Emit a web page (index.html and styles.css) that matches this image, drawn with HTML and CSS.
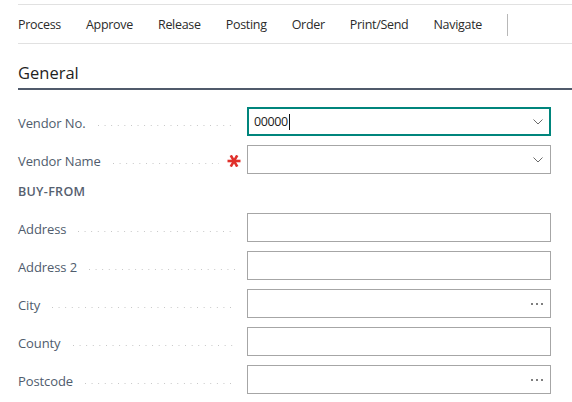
FILE: index.html
```html
<!DOCTYPE html>
<html lang="en">
<head>
<meta charset="utf-8">
<title>Purchase Order</title>
<link rel="stylesheet" href="styles.css">
</head>
<body>
<div class="page">
  <nav class="actions">
    <span class="action">Process</span>
    <span class="action">Approve</span>
    <span class="action">Release</span>
    <span class="action">Posting</span>
    <span class="action">Order</span>
    <span class="action">Print/Send</span>
    <span class="action">Navigate</span>
    <span class="divider"></span>
  </nav>

  <section class="group">
    <h2 class="group-title">General</h2>

    <div class="fields">
      <div class="field">
        <div class="field-label"><span class="label-text">Vendor No.</span><span class="leader"></span></div>
        <div class="control focused">
          <span class="value">00000</span><span class="caret"></span>
          <svg class="chevron" width="10" height="6" viewBox="0 0 10 6"><path d="M0.5 0.5 L5 5 L9.5 0.5" fill="none" stroke="#6b6b6b" stroke-width="1"/></svg>
        </div>
      </div>

      <div class="field">
        <div class="field-label"><span class="label-text">Vendor Name</span><span class="leader"></span>
          <svg class="required" width="14" height="12" viewBox="0 0 14 12"><g stroke="#e0302b" stroke-width="2.6" stroke-linecap="butt"><path d="M0.5 6 H13.5"/><path d="M3.75 0.4 L10.25 11.6"/><path d="M10.25 0.4 L3.75 11.6"/></g></svg>
        </div>
        <div class="control">
          <span class="value"></span>
          <svg class="chevron" width="10" height="6" viewBox="0 0 10 6"><path d="M0.5 0.5 L5 5 L9.5 0.5" fill="none" stroke="#6b6b6b" stroke-width="1"/></svg>
        </div>
      </div>

      <div class="subheading">BUY-FROM</div>

      <div class="field">
        <div class="field-label"><span class="label-text">Address</span><span class="leader"></span></div>
        <div class="control"><span class="value"></span></div>
      </div>

      <div class="field">
        <div class="field-label"><span class="label-text">Address 2</span><span class="leader"></span></div>
        <div class="control"><span class="value"></span></div>
      </div>

      <div class="field">
        <div class="field-label"><span class="label-text">City</span><span class="leader"></span></div>
        <div class="control"><span class="value"></span><span class="more"><i></i><i></i><i></i></span></div>
      </div>

      <div class="field">
        <div class="field-label"><span class="label-text">County</span><span class="leader"></span></div>
        <div class="control"><span class="value"></span></div>
      </div>

      <div class="field">
        <div class="field-label"><span class="label-text">Postcode</span><span class="leader"></span></div>
        <div class="control"><span class="value"></span><span class="more"><i></i><i></i><i></i></span></div>
      </div>
    </div>
  </section>
</div>
</body>
</html>
```

FILE: styles.css
```css
* { box-sizing: border-box; }

html, body {
  margin: 0;
  padding: 0;
  background: #ffffff;
}

body {
  font-family: "Open Sans", "Noto Sans", "Liberation Sans", sans-serif;
  font-size: 12.5px;
  color: #212121;
}

.page {
  padding: 4px 0 0 18px;
}

.actions {
  display: flex;
  align-items: center;
  gap: 25px;
  height: 40px;
  padding-top: 1px;
  border-top: 1px solid #e1e1e1;
  border-bottom: 1px solid #e1e1e1;
}

.action {
  color: #2b2b2b;
  white-space: nowrap;
  letter-spacing: -0.3px;
}

.divider {
  width: 1px;
  height: 22px;
  background: #b8b8b8;
}

.group-title {
  margin: 17px 0 0 0;
  font-size: 16.5px;
  font-weight: 400;
  line-height: 24px;
  padding-bottom: 3px;
  border-bottom: 2px solid #505a6b;
  color: #1f1f1f;
}

.fields {
  display: flex;
  flex-direction: column;
  gap: 9px;
  padding-top: 17px;
  padding-right: 21px;
}

.field {
  display: grid;
  grid-template-columns: 229px 1fr;
  height: 29px;
}

.field-label {
  display: flex;
  align-items: center;
  padding-top: 2px;
  padding-right: 12px;
  color: #505c6d;
  font-size: 13px;
  letter-spacing: -0.1px;
  white-space: nowrap;
}

.leader {
  flex: 1;
  align-self: stretch;
  margin-left: 12px;
  background-image: linear-gradient(to right, #c4c4c4 1px, transparent 1px);
  background-size: 6.6px 1px;
  background-repeat: repeat-x;
  background-position: 0 16px;
}

.required {
  flex: none;
  margin: 0 -6px 0 8px;
}

.control {
  display: flex;
  align-items: center;
  height: 29px;
  border: 1px solid #a6a6a6;
  padding: 0 7px 0 6px;
  background: #fff;
}

.control.focused {
  border: 2px solid #00857c;
  padding-left: 5px;
  padding-right: 6px;
}

.value {
  color: #212121;
  font-size: 12.5px;
  letter-spacing: -0.4px;
}

.caret {
  width: 1px;
  height: 16px;
  background: #111;
  margin-left: 1px;
}

.chevron {
  margin-left: auto;
}

.more {
  margin-left: auto;
  display: flex;
  gap: 3px;
  margin-right: 0;
}

.more i {
  display: block;
  width: 2px;
  height: 2px;
  border-radius: 1px;
  background: #555;
}

.subheading {
  height: 21px;
  display: flex;
  align-items: center;
  padding-bottom: 4px;
  font-size: 12.5px;
  font-weight: 600;
  letter-spacing: 0.3px;
  color: #56606f;
}
```
